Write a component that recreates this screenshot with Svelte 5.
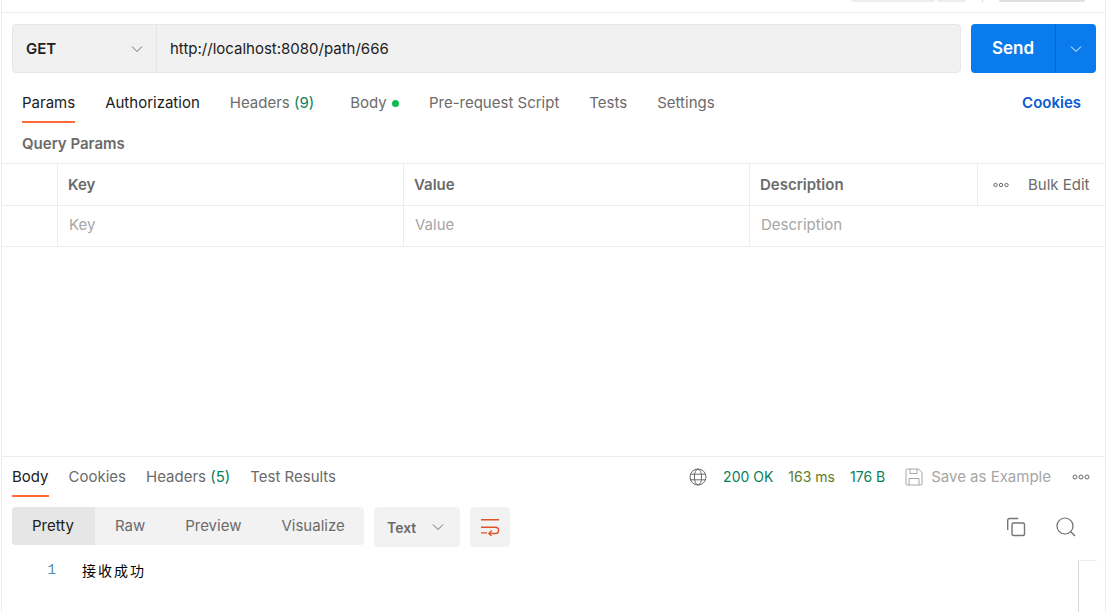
<script>
  const requestTabs = [
    { label: 'Params', active: true },
    { label: 'Authorization', dark: true },
    { label: 'Headers', count: '(9)' },
    { label: 'Body', dot: true },
    { label: 'Pre-request Script' },
    { label: 'Tests' },
    { label: 'Settings' }
  ];
  const responseTabs = [
    { label: 'Body', active: true },
    { label: 'Cookies' },
    { label: 'Headers', count: '(5)' },
    { label: 'Test Results' }
  ];
  const modes = ['Pretty', 'Raw', 'Preview', 'Visualize'];
</script>

<div class="page">
  <div class="topbar">
    <span class="stub s1"></span>
    <span class="stub s2"></span>
    <span class="tick"></span>
    <span class="stub s3"></span>
  </div>

  <div class="url-row">
    <div class="url-box">
      <div class="method">
        <span>GET</span>
        <svg width="12" height="12" viewBox="0 0 12 12"><path d="M1 3.5 6 8.5 11 3.5" fill="none" stroke="#6b6b6b" stroke-width="1"/></svg>
      </div>
      <div class="url">http://localhost:8080/path/666</div>
    </div>
    <div class="send">
      <span class="send-label">Send</span>
      <span class="send-more">
        <svg width="12" height="12" viewBox="0 0 12 12"><path d="M1 3.5 6 8.5 11 3.5" fill="none" stroke="#fff" stroke-width="1"/></svg>
      </span>
    </div>
  </div>

  <div class="req-tabs">
    {#each requestTabs as tab}
      <div class="req-tab" class:active={tab.active} class:dark={tab.dark} class:counted={tab.count}>
        {tab.label}
        {#if tab.count}<span class="count">{tab.count}</span>{/if}
        {#if tab.dot}<span class="dot"></span>{/if}
      </div>
    {/each}
    <div class="cookies">Cookies</div>
  </div>

  <div class="query-title">Query Params</div>

  <div class="table">
    <div class="row head">
      <div class="cell check"></div>
      <div class="cell key">Key</div>
      <div class="cell value">Value</div>
      <div class="cell desc">Description</div>
      <div class="cell bulk">
        <svg width="16" height="6" viewBox="0 0 16 6"><g fill="none" stroke="#6b6b6b" stroke-width="1"><circle cx="2.5" cy="3" r="1.7"/><circle cx="8" cy="3" r="1.7"/><circle cx="13.5" cy="3" r="1.7"/></g></svg>
        <span>Bulk Edit</span>
      </div>
    </div>
    <div class="row body">
      <div class="cell check"></div>
      <div class="cell key">Key</div>
      <div class="cell value">Value</div>
      <div class="cell desc wide">Description</div>
    </div>
  </div>

  <div class="spacer"></div>

  <div class="response">
    <div class="res-head">
      <div class="res-tabs">
        {#each responseTabs as tab}
          <div class="res-tab" class:active={tab.active}>
            {tab.label}
            {#if tab.count}<span class="count">{tab.count}</span>{/if}
          </div>
        {/each}
      </div>
      <div class="status">
        <svg class="globe" width="18" height="18" viewBox="0 0 18 18"><g fill="none" stroke="#6b6b6b" stroke-width="1"><circle cx="9" cy="9" r="8"/><ellipse cx="9" cy="9" rx="3.6" ry="8"/><path d="M1.6 6.2h14.8M1.6 11.8h14.8"/></g></svg>
        <span class="ok s-200">200 OK</span>
        <span class="ok s-ms">163 ms</span>
        <span class="ok s-b">176 B</span>
        <svg class="save" width="18" height="18" viewBox="0 0 18 18"><g fill="none" stroke="#a6a6a6" stroke-width="1"><path d="M1 2a1 1 0 0 1 1-1h11.5L17 4.500V16a1 1 0 0 1-1 1H2a1 1 0 0 1-1-1z"/><path d="M5 1v4.500h7V1M4 17v-6.500h10V17"/></g></svg>
        <span class="save-label">Save as Example</span>
        <svg class="more" width="18" height="6" viewBox="0 0 18 6"><g fill="none" stroke="#6b6b6b" stroke-width="1"><circle cx="3" cy="3" r="2"/><circle cx="9" cy="3" r="2"/><circle cx="15" cy="3" r="2"/></g></svg>
      </div>
    </div>

    <div class="toolbar">
      <div class="modes">
        {#each modes as mode, i}
          <div class="mode" class:active={i === 0}>{mode}</div>
        {/each}
      </div>
      <div class="format">
        <span>Text</span>
        <svg width="12" height="12" viewBox="0 0 12 12"><path d="M1 3.500 6 8.500 11 3.500" fill="none" stroke="#6b6b6b" stroke-width="1"/></svg>
      </div>
      <div class="wrap">
        <svg width="20" height="18" viewBox="0 0 20 18"><g fill="none" stroke="#e0532a"><path stroke-width="1.500" d="M1 1.750h18"/><path stroke-width="1.300" d="M1 9.250h14.500a3 3 0 0 1 0 6.250H9M11.800 12.500 8.800 15.500l3 3M1 14.800h6"/></g></svg>
      </div>
      <div class="tools">
        <svg width="20" height="20" viewBox="0 0 20 20"><g fill="none" stroke="#757575" stroke-width="1.400"><rect x="6" y="6" width="12.500" height="12.500" rx="1.500"/><path d="M1.700 13V3.500A2 2 0 0 1 3.700 1.500h8.500"/></g></svg>
        <svg width="20" height="20" viewBox="0 0 20 20"><g fill="none" stroke="#6b6b6b" stroke-width="1.200"><circle cx="9" cy="9" r="8"/><path d="M15 15l4 4"/></g></svg>
      </div>
    </div>

    <div class="code">
      <span class="line-no">1</span>
      <span class="line">接收成功</span>
      <div class="minimap"></div>
    </div>
  </div>
</div>

<style>
  :global(body) {
    margin: 0;
    background: #fff;
    overflow: hidden;
  }

  .page {
    width: 1103px;
    height: 612px;
    margin-left: 1px;
    border-left: 1px solid #ededed;
    border-right: 1px solid #ededed;
    display: flex;
    flex-direction: column;
    font-family: Inter, "Noto Sans CJK SC", sans-serif;
    font-size: 15px;
    color: #6b6b6b;
    overflow: hidden;
  }

  .topbar {
    height: 12px;
    border-bottom: 1px solid #ededed;
    display: flex;
    align-items: flex-start;
    padding-left: 849px;
    flex-shrink: 0;
  }

  .stub {
    height: 2px;
    border-radius: 0 0 3px 3px;
    background: #ededed;
  }
  .s1 { width: 84px; }
  .s2 { width: 29px; margin-left: 2px; }
  .s3 { width: 86px; margin-left: 16px; background: #e0e0e0; }
  .tick { width: 1px; height: 2px; background: #d6d6d6; margin-left: 16px; }

  .url-row {
    display: flex;
    gap: 10px;
    padding: 11px 8px 0 10px;
    flex-shrink: 0;
  }

  .url-box {
    width: 947px;
    height: 47px;
    display: flex;
    background: #f1f1f1;
    border: 1px solid #e6e6e6;
    border-radius: 4px;
  }

  .method {
    width: 144px;
    box-sizing: border-box;
    padding: 0 13px;
    display: flex;
    align-items: center;
    justify-content: space-between;
    border-right: 1px solid #e6e6e6;
    color: #212121;
    font-weight: 600;
  }

  .url {
    padding-left: 13px;
    line-height: 47px;
    color: #212121;
  }

  .send {
    width: 125px;
    height: 49px;
    display: flex;
    background: #097bed;
    border-radius: 4px;
    color: #fff;
  }

  .send-label {
    width: 84px;
    border-right: 1px solid #0768ca;
    text-align: center;
    line-height: 48px;
    font-size: 17px;
    font-weight: 600;
  }

  .send-more {
    flex: 1;
    display: flex;
    align-items: center;
    justify-content: center;
  }

  .req-tabs {
    position: relative;
    display: flex;
    gap: 30px;
    padding: 0 24px 0 20px;
    height: 48px;
    flex-shrink: 0;
  }

  .req-tab {
    height: 48px;
    box-sizing: border-box;
    padding-top: 20px;
    line-height: 20px;
    white-space: nowrap;
    border-bottom: 2px solid transparent;
  }

  .req-tab.active {
    color: #212121;
    height: 50px;
    border-bottom-color: #ff6c37;
  }
  .req-tab.dark { color: #212121; }
  .req-tab.counted { margin-right: 6px; }

  .count { color: #0a7f5a; }

  .dot {
    display: inline-block;
    width: 7px;
    height: 7px;
    border-radius: 50%;
    background: #0cbb52;
    margin-left: 1px;
    vertical-align: 1px;
  }

  .cookies {
    margin-left: auto;
    padding-top: 20px;
    line-height: 20px;
    color: #0b5bd3;
    font-weight: 600;
  }

  .query-title {
    height: 42px;
    box-sizing: border-box;
    padding: 13px 0 0 20px;
    line-height: 20px;
    font-weight: 600;
    flex-shrink: 0;
  }

  .table {
    border-top: 1px solid #ededed;
    flex-shrink: 0;
  }

  .row {
    display: flex;
    border-bottom: 1px solid #ededed;
  }
  .row.head { height: 41px; font-weight: 600; }
  .row.body { height: 40px; color: #a6a6a6; }

  .cell {
    box-sizing: border-box;
    border-right: 1px solid #ededed;
    padding-left: 10px;
    display: flex;
    align-items: center;
    white-space: nowrap;
  }
  .row.body .cell { padding-left: 11px; padding-bottom: 3px; }
  .row.body .cell.check { padding: 0; }
  .cell.check { width: 56px; padding: 0; }
  .cell.key { width: 346px; }
  .cell.value { width: 346px; }
  .cell.desc { width: 228px; }
  .cell.desc.wide { border-right: 0; flex: 1; }

  .cell.bulk {
    flex: 1;
    border-right: 0;
    padding-left: 15px;
    gap: 19px;
    font-weight: 400;
  }

  .spacer { flex: 1; }

  .response {
    height: 155px;
    flex-shrink: 0;
    border-top: 1px solid #ededed;
  }

  .res-head {
    display: flex;
    justify-content: space-between;
    padding: 0 15px 0 10px;
    height: 40px;
  }

  .res-tabs { display: flex; gap: 20px; }

  .res-tab {
    height: 40px;
    box-sizing: border-box;
    padding-top: 10px;
    line-height: 20px;
    white-space: nowrap;
    border-bottom: 2px solid transparent;
  }
  .res-tab.active {
    color: #212121;
    border-bottom-color: #ff6c37;
  }

  .status {
    display: flex;
    align-items: center;
    height: 40px;
    padding-bottom: 1px;
    box-sizing: border-box;
    white-space: nowrap;
  }

  .globe { margin-right: 16px; }
  .ok { color: #0a7f5a; font-size: 14px; }
  .s-200 { margin-right: 15px; }
  .s-ms { margin-right: 15px; color: #5e7d1f; }
  .s-b { margin-right: 20px; }
  .save { margin-right: 8px; }
  .save-label { color: #a6a6a6; margin-right: 21px; }

  .toolbar {
    display: flex;
    align-items: flex-start;
    padding: 10px 29px 0 10px;
    height: 50px;
    box-sizing: border-box;
  }

  .modes {
    display: flex;
    width: 352px;
    height: 38px;
    background: #f2f2f2;
    border-radius: 4px;
    overflow: hidden;
  }

  .mode {
    line-height: 38px;
    padding: 0 20px;
  }
  .mode.active { background: #e6e6e6; color: #212121; padding-right: 21px; }

  .format {
    margin-left: 10px;
    width: 86px;
    height: 40px;
    box-sizing: border-box;
    padding: 0 16px 0 13px;
    background: #f2f2f2;
    border-radius: 4px;
    display: flex;
    align-items: center;
    justify-content: space-between;
    font-size: 14px;
    font-weight: 600;
  }

  .wrap {
    margin-left: 10px;
    width: 40px;
    height: 40px;
    background: #f2f2f2;
    border-radius: 4px;
    display: flex;
    align-items: center;
    justify-content: center;
  }

  .tools {
    margin-left: auto;
    display: flex;
    gap: 30px;
    height: 40px;
    align-items: center;
  }

  .code {
    position: relative;
    display: flex;
    padding-top: 13px;
    line-height: 20px;
  }

  .line-no {
    width: 54px;
    text-align: right;
    font-family: "Liberation Mono", monospace;
    font-size: 14px;
    color: #4a8bb0;
  }

  .line {
    margin-left: 26px;
    color: #000;
    font-family: "Noto Sans CJK SC", sans-serif;
    font-size: 14px;
    letter-spacing: 2px;
  }

  .minimap {
    position: absolute;
    left: 1076px;
    top: 13px;
    width: 18px;
    height: 60px;
    border-left: 1px solid #d9d9d9;
    border-top: 1px solid #ededed;
  }
</style>
